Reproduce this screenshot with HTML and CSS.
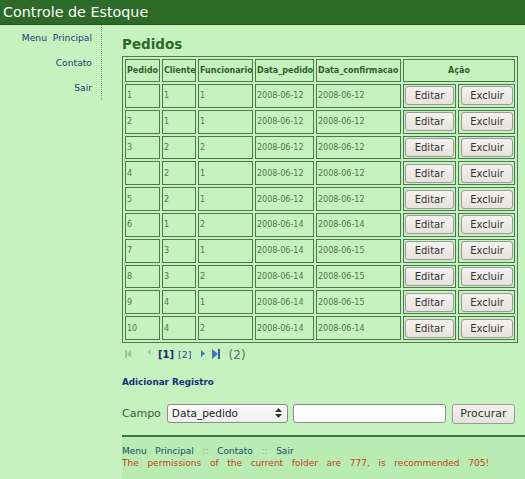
FILE: index.html
```html
<!DOCTYPE html>
<html lang="pt">
<head>
<meta charset="utf-8">
<title>Controle de Estoque</title>
<link rel="stylesheet" href="styles.css">
</head>
<body>
<header class="top">Controle de Estoque</header>
<div class="layout">
  <nav class="side">
    <a href="#">Menu&nbsp; Principal</a>
    <a href="#">Contato</a>
    <a href="#">Sair</a>
  </nav>
  <main class="content">
    <h1 class="title">Pedidos</h1>
    <table class="grid">
      <colgroup>
        <col class="c1"><col class="c2"><col class="c3"><col class="c4"><col class="c5"><col class="c6"><col class="c7">
      </colgroup>
      <thead>
        <tr class="head">
          <th>Pedido</th><th>Cliente</th><th>Funcionario</th><th>Data_pedido</th><th>Data_confirmacao</th><th colspan="2" class="center">Ação</th>
        </tr>
      </thead>
      <tbody>
        <tr><td>1</td><td>1</td><td>1</td><td>2008-06-12</td><td>2008-06-12</td><td><button class="btn">Editar</button></td><td><button class="btn">Excluir</button></td></tr>
        <tr><td>2</td><td>1</td><td>1</td><td>2008-06-12</td><td>2008-06-12</td><td><button class="btn">Editar</button></td><td><button class="btn">Excluir</button></td></tr>
        <tr><td>3</td><td>2</td><td>2</td><td>2008-06-12</td><td>2008-06-12</td><td><button class="btn">Editar</button></td><td><button class="btn">Excluir</button></td></tr>
        <tr><td>4</td><td>2</td><td>1</td><td>2008-06-12</td><td>2008-06-12</td><td><button class="btn">Editar</button></td><td><button class="btn">Excluir</button></td></tr>
        <tr><td>5</td><td>2</td><td>1</td><td>2008-06-12</td><td>2008-06-12</td><td><button class="btn">Editar</button></td><td><button class="btn">Excluir</button></td></tr>
        <tr><td>6</td><td>1</td><td>2</td><td>2008-06-14</td><td>2008-06-14</td><td><button class="btn">Editar</button></td><td><button class="btn">Excluir</button></td></tr>
        <tr><td>7</td><td>3</td><td>1</td><td>2008-06-14</td><td>2008-06-15</td><td><button class="btn">Editar</button></td><td><button class="btn">Excluir</button></td></tr>
        <tr><td>8</td><td>3</td><td>2</td><td>2008-06-14</td><td>2008-06-15</td><td><button class="btn">Editar</button></td><td><button class="btn">Excluir</button></td></tr>
        <tr><td>9</td><td>4</td><td>1</td><td>2008-06-14</td><td>2008-06-15</td><td><button class="btn">Editar</button></td><td><button class="btn">Excluir</button></td></tr>
        <tr><td>10</td><td>4</td><td>2</td><td>2008-06-14</td><td>2008-06-14</td><td><button class="btn">Editar</button></td><td><button class="btn">Excluir</button></td></tr>
      </tbody>
    </table>

    <div class="pager">
      <svg class="ic first" width="6" height="8" viewBox="0 0 6 8"><rect x="0" y="0" width="2" height="8" fill="#a9bca9"/><polygon points="6,0 6,8 2,4" fill="#a9bca9"/></svg>
      <svg class="ic prev" width="4" height="6" viewBox="0 0 4 6"><polygon points="4,0 4,6 0,3" fill="#a9bca9"/></svg>
      <a class="pg cur" href="#">[1]</a>
      <a class="pg" href="#">[2]</a>
      <svg class="ic next" width="4" height="7" viewBox="0 0 4 7"><polygon points="0,0 4,3.5 0,7" fill="#3f73c4"/></svg>
      <svg class="ic last" width="8" height="10" viewBox="0 0 8 10"><polygon points="0,0 6,5 0,10" fill="#3f73c4"/><rect x="6" y="0" width="2" height="10" fill="#2e5fb0"/></svg>
      <span class="count">(2)</span>
    </div>

    <a class="add" href="#">Adicionar Registro</a>

    <form class="search">
      <label class="lbl">Campo</label>
      <span class="selwrap">
        <select class="sel"><option>Data_pedido</option></select>
        <svg class="arrows" width="7" height="10" viewBox="0 0 7 10"><polygon points="3.5,0 7,4 0,4" fill="#333"/><polygon points="0,6 7,6 3.5,10" fill="#333"/></svg>
      </span>
      <input class="txt" type="text">
      <button class="btn go" type="button">Procurar</button>
    </form>

    <footer class="foot">
      <div class="fmenu"><a href="#">Menu Principal</a> <span class="sep">::</span> <a href="#">Contato</a> <span class="sep">::</span> <a href="#">Sair</a></div>
      <div class="warn">The permissions of the current folder are 777, is recommended 705!</div>
    </footer>
  </main>
</div>
</body>
</html>
```

FILE: styles.css
```css
* { box-sizing: border-box; }
html, body { margin: 0; padding: 0; }
body {
  width: 525px;
  height: 479px;
  overflow: hidden;
  background: #c6f2c0;
  font-family: "DejaVu Sans", Verdana, sans-serif;
  color: #3f6f3f;
}

.top {
  height: 25px;
  background: #2c6a28;
  border-bottom: 1px solid #245a21;
  color: #ffffff;
  font-size: 14.3px;
  line-height: 24px;
  padding-left: 3px;
}

.layout {
  display: flex;
  align-items: flex-start;
}

.side {
  width: 102px;
  flex: none;
  border-right: 1px dotted #7f9f7f;
  display: flex;
  flex-direction: column;
  align-items: flex-end;
  padding-right: 9px;
}
.side a {
  height: 25px;
  line-height: 25px;
  font-size: 9.2px;
  color: #2a3d6b;
  text-decoration: none;
}

.content {
  flex: 1;
  padding-left: 20px;
  display: flex;
  flex-direction: column;
  align-items: flex-start;
}

.title {
  margin: 11px 0 4px 0;
  font-size: 13.5px;
  line-height: 16px;
  font-weight: bold;
  color: #2d6a29;
}

.grid {
  table-layout: fixed;
  width: 396px;
  border: 1px solid #4d784d;
  border-spacing: 2px;
  font-size: 8px;
}
.grid col.c1 { width: 35px; }
.grid col.c2 { width: 34px; }
.grid col.c3 { width: 55px; }
.grid col.c4 { width: 59px; }
.grid col.c5 { width: 85px; }
.grid col.c6 { width: 53px; }
.grid col.c7 { width: 57px; }
.grid th, .grid td {
  border: 1px solid #4d784d;
  padding: 1px;
  overflow: hidden;
  white-space: nowrap;
  vertical-align: middle;
}
.grid th {
  text-align: left;
  font-weight: bold;
  color: #2d5f2d;
}
.grid th.center { text-align: center; }
.grid tr.head { height: 23px; }
.grid tbody tr { height: 23.8px; }
.grid td {
  color: #4a7a4a;
  font-size: 8px;
}

.btn {
  font-family: "DejaVu Sans", Verdana, sans-serif;
  font-size: 10px;
  color: #333333;
  background: linear-gradient(#f4f2ef, #e6e3de);
  border: 1px solid #9c9a96;
  border-radius: 3px;
  height: 19px;
  padding: 0;
  margin: 0;
  display: block;
}
.grid td .btn { width: 49px; }
.grid td:last-child .btn { width: 52px; margin-left: 1px; }

.pager {
  height: 20px;
  display: flex;
  align-items: center;
  margin-top: 1px;
}
.ic { display: block; }
.ic.first { margin-left: 3px; }
.ic.prev { margin-left: 16px; margin-top: -3px; }
.pg {
  font-size: 9.5px;
  color: #2d4b8a;
  text-decoration: none;
  margin-left: 4px;
  line-height: 20px;
  margin-top: 3px;
}
.pg.cur {
  font-weight: bold;
  font-size: 10px;
  color: #1a2f6a;
  margin-left: 7px;
}
.ic.next { margin-left: 9px; }
.ic.last { margin-left: 7px; }
.count {
  margin-left: 9px;
  font-size: 12px;
  color: #666a66;
  margin-top: 3px;
}

.add {
  margin-top: 12px;
  font-size: 8.8px;
  line-height: 12px;
  font-weight: bold;
  color: #1c2f7a;
  text-decoration: none;
}

.search {
  margin: 16px 0 0 0;
  display: flex;
  align-items: center;
  height: 20px;
}
.lbl {
  font-size: 11px;
  color: #3d5a3d;
  margin-right: 6px;
}
.selwrap {
  position: relative;
  display: block;
}
.sel {
  -webkit-appearance: none;
  appearance: none;
  display: block;
  width: 121px;
  height: 19px;
  font-family: "DejaVu Sans", Verdana, sans-serif;
  font-size: 10.5px;
  line-height: 17px;
  color: #222;
  background: linear-gradient(#fdfdfd, #efefef);
  border: 1px solid #8c8c8c;
  border-radius: 3px;
  padding: 0 0 1px 4px;
  margin: 0;
}
.arrows {
  position: absolute;
  right: 6px;
  top: 4px;
  pointer-events: none;
}
.txt {
  width: 153px;
  height: 19px;
  margin: 0 0 0 5px;
  border: 1px solid #8c8c8c;
  border-radius: 3px;
  background: #ffffff;
  padding: 0;
}
.btn.go {
  width: 63px;
  height: 20px;
  margin-left: 6px;
  font-size: 11px;
}

.foot {
  margin-top: 11px;
  width: 403px;
  height: 45px;
  border-top: 2px solid #3c7a38;
  background: #b8ecb2;
  padding-top: 8px;
  font-size: 9px;
  line-height: 12px;
  word-spacing: 5.8px;
}
.fmenu a { color: #1d4a6e; text-decoration: none; }
.fmenu .sep { color: #8aa88a; }
.warn { color: #c4421c; white-space: nowrap; }
```
